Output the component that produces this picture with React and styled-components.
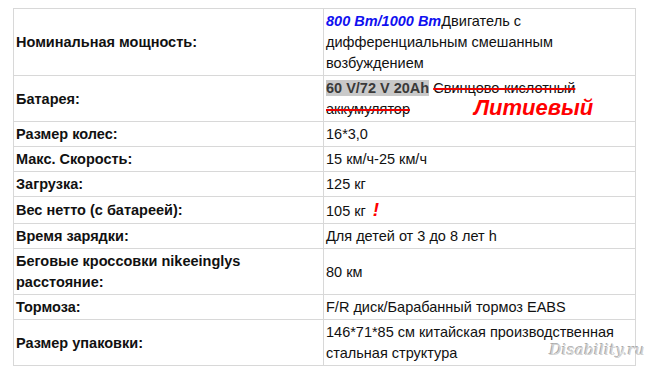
import styled, { createGlobalStyle } from 'styled-components'

const Global = createGlobalStyle`
	body {
		margin: 0;
		background: #fff;
		font-family: "Liberation Sans", Arial, sans-serif;
	}
`

const Page = styled.div`
	position: relative;
	width: 650px;
	height: 366px;
	overflow: hidden;
	padding: 8px 0 0 13px;
	box-sizing: border-box;
`

const Table = styled.table`
	width: 623px;
	border-collapse: collapse;
	font-size: 14.5px;
	line-height: 21px;
	color: #111;
	td {
		border: 1px solid #d8d8d8;
		padding: 2px 2px 1px;
		vertical-align: middle;
	}
`

const Label = styled.td`
	width: 305px;
	font-weight: bold;
`

const Value = styled.td`
	position: relative;
`

const Power = styled.span`
	color: #1010f0;
	font-weight: bold;
	font-style: italic;
`

const Mark = styled.span`
	background: #c9c9c9;
	color: #3a3a3a;
	font-weight: bold;
`

const Struck = styled.span`
	text-decoration: line-through;
	text-decoration-color: #e00;
	text-decoration-thickness: 2px;
`

const Note = styled.span`
	position: absolute;
	left: 150px;
	top: 21px;
	color: #f00;
	font-size: 22px;
	line-height: 1;
	font-weight: bold;
	font-style: italic;
`

const Bang = styled.span`
	margin-left: 7px;
	color: #f00;
	font-size: 19px;
	font-weight: bold;
	font-style: italic;
`

const Watermark = styled.div`
	position: absolute;
	right: 5px;
	bottom: 7px;
	font-family: "DejaVu Serif", serif;
	font-style: italic;
	font-size: 15px;
	color: #d0d0d0;
	text-shadow: 1px 1px 0 #fff, -1px -1px 0 #aaa;
	letter-spacing: 0.3px;
`

const rows = [
	['Размер колес:', '16*3,0'],
	['Макс. Скорость:', '15 км/ч-25 км/ч'],
	['Загрузка:', '125 кг'],
]

export default function App() {
	return (
		<Page>
			<Global />
			<Table>
				<tbody>
					<tr>
						<Label>Номинальная мощность:</Label>
						<Value>
							<Power>800 Вт/1000 Вт</Power>Двигатель с дифференциальным смешанным возбуждением
						</Value>
					</tr>
					<tr>
						<Label>Батарея:</Label>
						<Value>
							<Mark>60 V/72 V 20Ah</Mark> <Struck>Свинцово-кислотный аккумулятор</Struck>
							<Note>Литиевый</Note>
						</Value>
					</tr>
					{rows.map(([k, v]) => (
						<tr key={k}>
							<Label>{k}</Label>
							<Value>{v}</Value>
						</tr>
					))}
					<tr>
						<Label>Вес нетто (с батареей):</Label>
						<Value>
							105 кг<Bang>!</Bang>
						</Value>
					</tr>
					<tr>
						<Label>Время зарядки:</Label>
						<Value>Для детей от 3 до 8 лет h</Value>
					</tr>
					<tr>
						<Label>Беговые кроссовки nikeeinglys расстояние:</Label>
						<Value>80 км</Value>
					</tr>
					<tr>
						<Label>Тормоза:</Label>
						<Value>F/R диск/Барабанный тормоз EABS</Value>
					</tr>
					<tr>
						<Label>Размер упаковки:</Label>
						<Value>146*71*85 см китайская производственная стальная структура</Value>
					</tr>
				</tbody>
			</Table>
			<Watermark>Disability.ru</Watermark>
		</Page>
	)
}
